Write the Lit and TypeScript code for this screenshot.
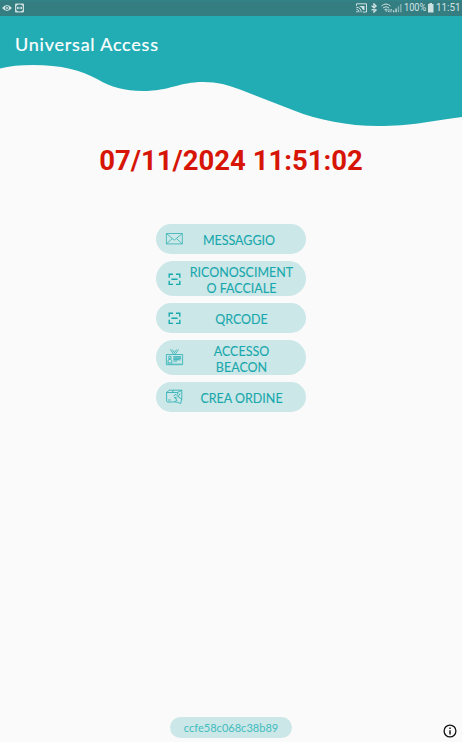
import { LitElement, html, css, svg } from "lit";
import { customElement } from "lit/decorators.js";

const mail = svg`<g fill="none" stroke="#35b1b4" stroke-width=".8"><path d="M1.4 3.5H17.3V13.9H1.4ZM1.4 3.5 9.3 10.2 17.3 3.5M1.4 13.9 7.2 8.6M17.3 13.9 11.5 8.6"/></g>`;
const scan = svg`<path fill="none" stroke="#18a9ae" stroke-width="1.4" d="M4.2 7.8V4.2H8M11 4.2H14.8V7.8M4.2 10.8V14.4H8M11 14.4H14.8V10.8M6.4 9.3H12.6"/>`;
const badge = svg`<g fill="none" stroke="#2bafb3" stroke-width=".8"><path d="M5.3 .5 8.6 5.3H10.2L13.5 .5M7.2 .5 9.4 3.7 11.6 .5M1.4 5.5H17.6V15.7H1.4Z"/><path d="M3 14V11.2L4.2 10.5H5.5L6.8 11.2V14ZM3.8 7.3H6V9.8H3.8ZM8.5 7.7H16M8.5 9.2H16M8.5 10.7H14.5M8.5 12.2H12"/></g><path fill="#2bafb3" opacity=".4" d="M8.2 7.2H16.2V11.5H8.2ZM2 14.2H17V15.5H2Z"/>`;
const order = svg`<g fill="none" stroke="#2bafb3" stroke-width=".85"><path d="M8.8 14H2.8Q1.6 14 1.6 12.8V4.4L4.2 2.2H16.8V11.5M1.6 4.5H12.2L16.8 2.4M6.8 4.3 9 2.4M3.2 12H5.7M12.6 4.5V6.5"/><path d="M8.5 7.8 11 6.4 13.2 8.8 16.7 11.2 15.6 15.6 12.8 14.4 9.2 13.8 12 12.4 9.3 9.2 12.2 10.2M13.2 8.8 15 5.4"/></g>`;

const actions = [
  { icon: mail, lines: ["MESSAGGIO"], cls: "message" },
  { icon: scan, lines: ["RICONOSCIMENT", "O FACCIALE"], cls: "tall" },
  { icon: scan, lines: ["QRCODE"], cls: "" },
  { icon: badge, lines: ["ACCESSO", "BEACON"], cls: "tall" },
  { icon: order, lines: ["CREA ORDINE"], cls: "" },
];

@customElement("app-root")
export class AppRoot extends LitElement {
  static styles = css`
    :host { display: flex; flex-direction: column; position: relative; width: 462px; height: 742px; overflow: hidden; background: #fafafa; font-family: Lato, "Open Sans", sans-serif; }
    * { box-sizing: border-box; }
    svg { display: block; flex: none; }
    .status { height: 16px; background: linear-gradient(#2f868a 0, #347d81 2px); display: flex; align-items: center; flex: none; color: #d3e4e4; font: 10px/16px Roboto, sans-serif; padding: 0 3px 0 2px; }
    .status svg { color: #cfe2e2; }
    .pct { margin-left: 2px; width: 23px; white-space: nowrap; transform: scaleX(.92); transform-origin: left; }
    .time { margin-left: 2px; width: 23px; white-space: nowrap; transform: scaleX(.98); transform-origin: left; }
    .grow { flex: 1; }
    .header { height: 112px; flex: none; display: grid; }
    .header > * { grid-area: 1 / 1; }
    h1 { margin: 17px 0 0 15px; font-size: 18px; line-height: 22px; font-weight: 400; letter-spacing: .78px; color: #fff; -webkit-text-stroke: .2px #fff; }
    .clock { text-align: center; font: 700 27.5px/34px Roboto, sans-serif; color: #d61507; margin-top: 16px; white-space: nowrap; }
    .list { display: flex; flex-direction: column; gap: 7px; width: 150px; margin: 46px 0 0 156px; }
    .pill { background: #cbe7e7; border-radius: 18px; height: 30px; display: flex; align-items: center; padding: 4px 11px 0 9px; }
    .tall { height: 35px; padding-top: 5px; }
    .pill svg { margin-top: -5px; }
    .tall svg { margin-top: -5px; }
    .label { flex: 1; margin: 0 -4px 0 0; display: flex; flex-direction: column; align-items: center; font-size: 12.5px; line-height: 16px; color: #18a7ad; white-space: nowrap; -webkit-text-stroke: .1px #18a7ad; }
    .message .label { padding-right: 5px; }
    .foot { display: flex; height: 21px; margin: 0 5px 4px 170px; align-items: center; flex: none; }
    .id { width: 122px; height: 21px; border-radius: 11px; background: #cbe7e7; color: #42bcbf; text-align: center; font-size: 11px; line-height: 22px; letter-spacing: .03px; }
    .foot svg { margin-top: 6px; }
  `;

  render() {
    return html`
      <div class="status">
        <svg width="10" height="10" viewBox="0 0 10 10"><path d="M0 5Q5-1 10 5Q5 11 0 5Z" fill="currentColor"/><circle cx="5" cy="5" r="1.9" fill="#347d81"/><circle cx="5" cy="5" r="1" fill="currentColor"/></svg>
        <svg width="12" height="10" viewBox="0 0 12 10"><rect x="3" y=".5" width="9" height="9" rx="1" fill="currentColor"/><circle cx="7.5" cy="5" r="3.6" fill="#347d81"/><path d="M4.2 5 6.2 3.3V4.4H8.8V3.3L10.8 5 8.8 6.7V5.6H6.2V6.7Z" fill="currentColor"/></svg>
        <span class="grow"></span>
        <svg width="11" height="10" viewBox="0 0 11 10" fill="none" stroke="currentColor"><path d="M.5 2.8V.8H10.5V9H6.7M.3 4.2Q5 4.5 5.2 9.3M.3 6.2Q3 6.5 3.2 9.3"/><path d="M3 3H8.5V7H7Q6 4 3 3Z" fill="currentColor" stroke="none"/><circle cx="1" cy="8.7" r=".8" fill="currentColor" stroke="none"/></svg>
        <svg width="14" height="10" viewBox="0 0 14 10" fill="none" stroke="currentColor" stroke-width="1.2"><path d="M4.5 2.6 9.2 7 6.9 9.2V.8L9.2 3 4.5 7.4"/></svg>
        <svg width="12" height="10" viewBox="0 0 12 10" fill="none" stroke="currentColor"><path d="M.5 3Q5-1 9.5 3M2 5Q5 2.2 8 5M3.5 6.7Q5 5.5 6.5 6.7"/><path d="M5.2 9 4 7.5H6.4Z" fill="currentColor" stroke="none"/><path d="M8 5.8V9M6.9 7.8 8 9.2M10 9.3V6.3M10 6.1 11 7.4" stroke-width=".8"/></svg>
        <svg width="9" height="10" viewBox="0 0 9 10" fill="currentColor"><path d="M0 7.5H1.3V9.3H0ZM2.4 5.5H3.7V9.3H2.4Z"/><path d="M4.8 3.2H6.1V9.3H4.8ZM7.2 1H8.5V9.3H7.2Z" opacity=".55"/></svg>
        <span class="pct">100%</span>
        <svg width="7" height="10" viewBox="0 0 7 10"><path d="M2.5 0H5V1H6.5V9.5H1V1H2.5Z" fill="currentColor"/></svg>
        <span class="time">11:51</span>
      </div>
      <div class="header">
        <svg width="462" height="112" viewBox="0 16 462 112"><path fill="#22adb5" d="M0 16H462V117C432 121 411 126 378 126C348 126 318 120 294 110.5L240 89.5C228 85 218 82 203 82C179 82 170 91 143 91C124 91 111 87 98 79.5C81 70 61 65 33 65C20 65 9 66 0 68.5Z"/></svg>
        <h1>Universal Access</h1>
      </div>
      <div class="clock">07/11/2024 11:51:02</div>
      <div class="list">
        ${actions.map((a) => html`<div class="pill ${a.cls}">
          <svg width="19" height="18" viewBox="0 0 19 18">${a.icon}</svg>
          <div class="label">${a.lines.map((l) => html`<span>${l}</span>`)}</div>
        </div>`)}
      </div>
      <span class="grow"></span>
      <div class="foot">
        <div class="id">ccfe58c068c38b89</div>
        <span class="grow"></span>
        <svg width="14" height="14" viewBox="0 0 14 14"><circle cx="7" cy="7" r="5.9" fill="none" stroke="#111" stroke-width="1.3"/><path d="M6.3 3.6H7.7V5H6.3ZM6.3 6.2H7.7V10.4H6.3Z" fill="#111"/></svg>
      </div>`;
  }
}
